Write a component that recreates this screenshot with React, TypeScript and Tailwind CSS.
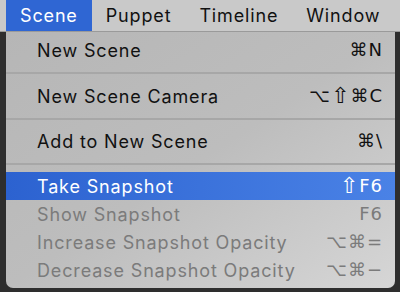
import React from "react";

type Item = { label: string; keys: string; state?: "active" | "disabled" };

const groups: Item[][] = [
  [{ label: "New Scene", keys: "⌘N" }],
  [{ label: "New Scene Camera", keys: "⌥⇧⌘C" }],
  [{ label: "Add to New Scene", keys: "⌘\\" }],
  [
    { label: "Take Snapshot", keys: "⇧F6", state: "active" },
    { label: "Show Snapshot", keys: "F6", state: "disabled" },
    { label: "Increase Snapshot Opacity", keys: "⌥⌘=", state: "disabled" },
    { label: "Decrease Snapshot Opacity", keys: "⌥⌘−", state: "disabled" },
  ],
];

const font = { fontFamily: 'Inter, "DejaVu Sans", sans-serif' };

function Keys({ keys }: { keys: string }) {
  return (
    <span className="flex items-center gap-[1px]" style={{ fontFamily: '"DejaVu Sans", sans-serif' }}>
      {Array.from(keys).map((k, i) => (
        <span key={i} className={k === "⇧" ? "text-[22px] leading-none" : "leading-none"}>
          {k}
        </span>
      ))}
    </span>
  );
}

function Row({ item }: { item: Item }) {
  const color =
    item.state === "active"
      ? "bg-gradient-to-r from-[#2c62d0] to-[#4a82e6] text-white"
      : item.state === "disabled"
        ? "text-[#7b7b7b]"
        : "text-[#111]";
  return (
    <div className={`flex h-[28px] items-center justify-between pl-[31px] pr-[13px] text-[18px] ${color}`}>
      <span className="tracking-[0.85px]">{item.label}</span>
      <Keys keys={item.keys} />
    </div>
  );
}

export default function App() {
  return (
    <div className="h-[292px] w-[400px] overflow-hidden bg-[#2e2e2e]" style={font}>
      <div className="flex h-[32px] items-stretch border-b border-[#9a9a9a] bg-[#c9c9c9] pl-[6px] text-[18px] tracking-[0.85px] text-[#111]">
        <div className="flex items-center bg-[#2f66d3] px-[14px] text-white">Scene</div>
        <div className="flex items-center px-[14px]">Puppet</div>
        <div className="flex items-center px-[14px]">Timeline</div>
        <div className="flex items-center px-[14px]">Window</div>
      </div>
      <div className="ml-[6px] w-[389px] rounded-b-[7px] bg-gradient-to-br from-[#b6b6b6] via-[#bdbdbd] to-[#d6d6d6] pt-[4px] pb-[4px]">
        {groups.map((g, i) => (
          <div key={i}>
            {i > 0 && (
              <div className={`flex items-center ${i === 1 ? "h-[18px]" : "h-[17px]"}`}>
                <div className="h-[2px] w-full bg-[#a7a7a7]" />
              </div>
            )}
            {g.map((item) => (
              <Row key={item.label} item={item} />
            ))}
          </div>
        ))}
      </div>
    </div>
  );
}
